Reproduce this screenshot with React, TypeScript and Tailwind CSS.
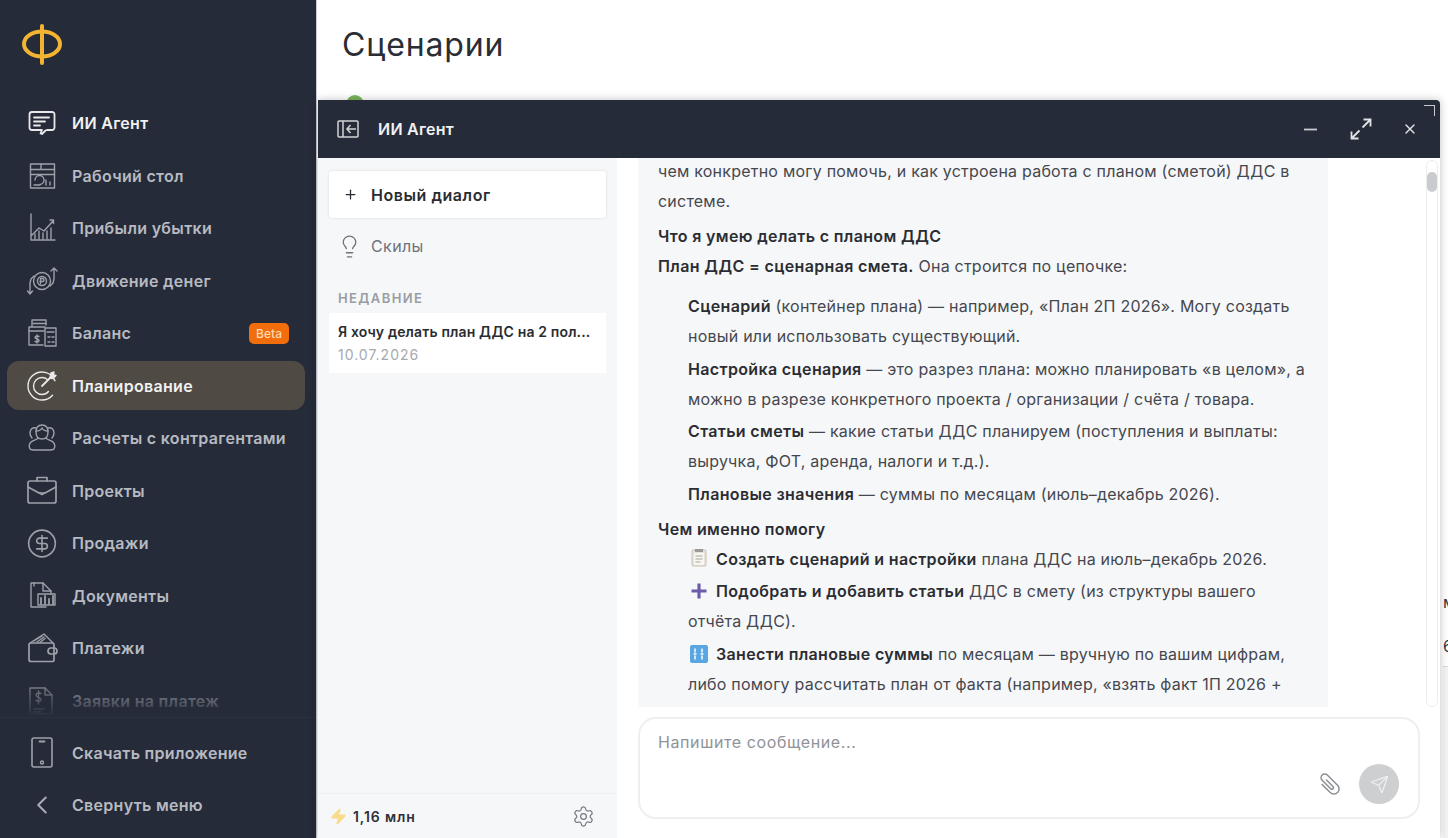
import React from "react";
import { Lightbulb, Settings, Send, ChevronLeft, CircleDollarSign, X, Plus, Zap } from "lucide-react";

const S = ({ children, size = 32 }: { children: React.ReactNode; size?: number }) => (
  <svg width={size} height={size} viewBox="0 0 32 32" fill="none" stroke="currentColor" strokeWidth="1.4" strokeLinecap="round" strokeLinejoin="round" className="shrink-0">
    {children}
  </svg>
);

const icons: Record<string, React.ReactNode> = {
  agent: (
    <S>
      <path d="M6 5h20a2.500 2.500 0 0 1 2.500 2.500v13a2.500 2.500 0 0 1-2.500 2.500h-5l-1.500.5-3.500 3.500-1.500-.5 1.500-3.500H6a2.500 2.500 0 0 1-2.500-2.500v-13A2.500 2.500 0 0 1 6 5z" strokeWidth="1.800" />
      <path d="M8 10.500h15M8 14.500h11M8 18.500h6" strokeWidth="1.800" />
    </S>
  ),
  desk: (
    <S>
      <rect x="4.500" y="4" width="24" height="24" />
      <path d="M4.500 9.500h24M4.500 14.500h24M15 4v5.500" />
      <path d="M9 20a4.500 4.500 0 1 1 5 4.500M8 25h6M20 20v5M24 22v3" />
    </S>
  ),
  profit: (
    <S>
      <path d="M5 2v26h24M5 24l8-8 5 3 9-10M24 8h3.500v3.500" />
      <path d="M9 27v-5M13 27v-8M17 27v-6M21 27v-8M25 27v-11" />
    </S>
  ),
  money: (
    <S>
      <circle cx="16" cy="16" r="8.500" />
      <circle cx="16" cy="16" r="4.500" />
      <path d="M14.500 18.500v-5h2a1.500 1.500 0 0 1 0 3h-2.500" />
      <path d="M28 14V3.500M25 6l3-3 3 3M4 18v10.500M1.500 26l2.500 3 2.500-3M8 11 5 14l-1 4M24 21l3-3 1-4" />
    </S>
  ),
  balance: (
    <S>
      <path d="M6 10V3h14v5M3 28V10h16M3 28h14" />
      <path d="M7 6.500h13M3 14h15" />
      <rect x="19" y="11" width="11" height="18" />
      <path d="M21 15h7M22 20h2M26 20h2M22 25h2M26 25h2" />
      <path d="M11 18v8M13 19.500c-2-1-4-.5-4 1 0 2 4 1 4 3s-2 1.500-4 1" />
    </S>
  ),
  plan: (
    <S>
      <circle cx="16" cy="16" r="14" strokeDasharray="72 16" strokeDashoffset="-10" />
      <circle cx="16" cy="16" r="8.500" strokeDasharray="40 14" strokeDashoffset="-6" />
      <path d="M16 16 26 6" strokeWidth="1.800" />
      <path d="m25 3 3-1-.5 3 2.500.5-3 3-3-.5z" fill="currentColor" />
    </S>
  ),
  people: (
    <S>
      <path d="M16 3c-4 0-6 3-6 7s2 7 6 7 6-3 6-7-2-7-6-7z" />
      <path d="M10 9c3 0 5-1 6-3 1 2 3 3 6 3" />
      <path d="M12 16c-1 2-5 2-7 4-2 2-2 5-1 7 1 1 4 1 6 1h12c3 0 5 0 6-1 1-2 1-5-1-7-2-2-6-2-7-4" />
      <path d="M10 6C7 5 4 7 4 11c0 2 1 4 2 5M22 6c3-1 6 1 6 5 0 2-1 4-2 5" />
    </S>
  ),
  projects: (
    <S>
      <rect x="2" y="6" width="28" height="22" rx="2" strokeWidth="1.700" />
      <path d="M11 6V2.500h10V6" strokeWidth="1.700" />
      <path d="M2 12 13 18h6l11-6" strokeWidth="1.700" />
      <path d="M13.500 18l2.500 1.500 2.500-1.500" strokeWidth="1.700" />
    </S>
  ),
  docs: (
    <S>
      <path d="M5 3h12l8 8v3M5 3v24h15" />
      <path d="M8 3v3M17 3v8h8" />
      <rect x="12" y="14" width="17" height="11" />
      <path d="M15 24v-6M19 24v-8M23 24v-5M27 24v-8" strokeWidth="1.800" />
    </S>
  ),
  wallet: (
    <S>
      <path d="M3 13a2 2 0 0 1 2-2h21a2 2 0 0 1 2 2v15a1.500 1.500 0 0 1-1.500 1.500H5a2 2 0 0 1-2-2z" strokeWidth="1.700" />
      <rect x="22" y="16" width="9" height="6" rx="3" strokeWidth="1.700" />
      <path d="M4 11 18 2l9 9M8 9l8-5M11 10l7-5M14 10.500l5-4" />
    </S>
  ),
  request: (
    <S>
      <path d="M4 3h15l7 7v19H4z" />
      <path d="M19 3v7h7M8 24h10M8 27h7" />
      <path d="M15 8.500c-2-1-5-.5-5 1.500 0 3 5 2 5 4.500s-3 2-5 1M12.500 6v13" />
    </S>
  ),
  phone: (
    <S>
      <rect x="6" y="1" width="20" height="29" rx="2" strokeWidth="1.600" />
      <path d="M13.500 4.500h5" strokeWidth="1.800" />
      <circle cx="16" cy="25.500" r="1.500" />
    </S>
  ),
};

const nav = [
  { key: "agent", label: "ИИ Агент", white: true },
  { key: "desk", label: "Рабочий стол" },
  { key: "profit", label: "Прибыли убытки" },
  { key: "money", label: "Движение денег" },
  { key: "balance", label: "Баланс", beta: true },
  { key: "plan", label: "Планирование", active: true },
  { key: "people", label: "Расчеты с контрагентами" },
  { key: "projects", label: "Проекты" },
  { key: "dollar", label: "Продажи" },
  { key: "docs", label: "Документы" },
  { key: "wallet", label: "Платежи" },
  { key: "request", label: "Заявки на платеж" },
];

type Item = { key: string; label: string; white?: boolean; active?: boolean; beta?: boolean };

function NavRow({ item }: { item: Item }) {
  const bright = item.white || item.active;
  return (
    <div
      className={`mr-[11px] ml-[7px] flex h-[49px] shrink-0 items-center rounded-[12px] pr-[16px] pl-[19px] ${
        item.active ? "bg-[#4f4a43]" : ""
      } ${bright ? "text-[#f1f1f2]" : "text-[#b7bac1]"}`}
    >
      <span className={`flex w-[32px] justify-center ${bright ? "text-[#e9e9ea]" : "text-[#9da1a9]"}`}>
        {item.key === "dollar" ? <CircleDollarSign size={33} strokeWidth={1.2} /> : icons[item.key]}
      </span>
      <span className="ml-[14px] text-[16px] font-semibold tracking-[0.3px]">{item.label}</span>
      {item.beta && (
        <span className="ml-auto rounded-[5px] bg-[#f26d0c] px-[7px] py-[3px] text-[12px] leading-[15px] font-medium text-[#ffd9b5]">
          Beta
        </span>
      )}
    </div>
  );
}

const B = ({ children }: { children: React.ReactNode }) => <b className="font-semibold tracking-[0.35px] text-[#2b2d33]">{children}</b>;

function Para({ children, mt = 0, indent = false }: { children: React.ReactNode; mt?: number; indent?: boolean }) {
  return (
    <p className={indent ? "pl-[30px]" : ""} style={{ marginTop: mt }}>
      {children}
    </p>
  );
}

function Clipboard() {
  return (
    <svg width="16" height="18" viewBox="0 0 16 18" className="mr-[9px] ml-[3px] inline-block align-[-2px]">
      <rect x="1" y="1" width="14" height="16" rx="1" fill="#e8e4dc" stroke="#c9c3b6" />
      <rect x="3" y="4" width="10" height="12" fill="#f7f6f2" />
      <rect x="4" y="0" width="8" height="3" fill="#9b9a98" />
      <path d="M4.500 7h7M4.500 10h7M4.500 13h5" stroke="#a5a5a5" strokeWidth="1" />
    </svg>
  );
}
function PurplePlus() {
  return (
    <svg width="18" height="18" viewBox="0 0 18 18" className="mr-[8px] ml-[2px] inline-block align-[-3px]">
      <path d="M9 1.500v15M1.500 9h15" stroke="#6c5cab" strokeWidth="3.200" />
    </svg>
  );
}
function Numbers() {
  return (
    <svg width="18" height="18" viewBox="0 0 18 18" className="mr-[8px] ml-[2px] inline-block align-[-3px]">
      <rect width="18" height="18" rx="2" fill="#5aa6e2" />
      <path d="M5 3.500v4M5 10.500v4M12 3.500v4M12 10.500v4M3.500 9h3M10.500 9h3" stroke="#fff" strokeWidth="1.500" />
    </svg>
  );
}

export default function App() {
  return (
    <div className="relative flex h-[838px] w-[1448px] overflow-hidden bg-white font-['Inter',sans-serif]">
      <aside className="flex h-full w-[317px] shrink-0 flex-col border-r border-[#c8cbd0] bg-[#252b39]">
        <div className="h-[98.500px] shrink-0 pt-[24px] pl-[21px]">
          <svg width="42" height="42" viewBox="0 0 42 42" fill="none" stroke="#f2b431" strokeWidth="4" role="img" aria-label="logo">
            <ellipse cx="21" cy="20" rx="18" ry="12.500" />
            <path d="M21 2v37" strokeLinecap="round" />
          </svg>
        </div>
        <div className="relative h-[618.500px] shrink-0 overflow-hidden">
          <div className="flex flex-col gap-[3.5px]">
            {nav.map((n) => (
              <NavRow key={n.key} item={n} />
            ))}
          </div>
          <div className="absolute right-0 bottom-0 left-0 h-[44px] bg-gradient-to-b from-[#252b3900] to-[#252b39]" />
        </div>
        <div className="flex flex-1 flex-col gap-[3.5px] border-t border-[#2c3241] pt-[10px]">
          <NavRow item={{ key: "phone", label: "Скачать приложение" }} />
          <div className="mr-[11px] ml-[7px] flex h-[49px] items-center pl-[19px] text-[#b7bac1]">
            <span className="flex w-[32px] justify-center text-[#a9adb5]">
              <ChevronLeft size={30} strokeWidth={1.6} />
            </span>
            <span className="ml-[14px] text-[16px] font-semibold tracking-[0.3px]">Свернуть меню</span>
          </div>
        </div>
      </aside>

      <main className="flex min-w-0 flex-1">
        <div className="min-w-0 flex-1 pt-[24px] pl-[25px]">
          <h1 className="text-[32px] leading-[42px] font-normal tracking-[0.85px] text-[#2a2d34]">Сценарии</h1>
          <div className="mt-[29px] ml-[4px] h-[18px] w-[18px] rounded-full bg-[#7cb55b]" />
        </div>
        <div className="flex w-[8px] shrink-0 flex-col overflow-hidden bg-white pt-[592px] pl-[3px] text-[16px] leading-[20px] text-[#33363c]">
          <span>м</span>
          <span className="mt-[24px]">6</span>
          <div className="mt-[10px] h-[1px] w-full shrink-0 bg-[#dcdde0]" />
          <div className="w-full flex-1 bg-[#f4f4f5]" />
        </div>
      </main>

      {/* AI agent window */}
      <section className="absolute top-[100px] left-[318px] flex h-[738px] w-[1122px] flex-col bg-white shadow-[0_0_8px_rgba(0,0,0,0.25)]">
        <header className="relative flex h-[58px] shrink-0 items-center rounded-tr-[4px] bg-[#252b39] pr-[22px] pl-[19px] text-[#f1f1f2]">
          <svg width="22" height="18" viewBox="0 0 22 18" fill="none" stroke="#d2d3d6" strokeWidth="1.500">
            <rect x="1" y="1" width="20" height="16" rx="1" />
            <path d="M6 1v16M19 9h-9M13.500 5 10 9l3.500 4" />
          </svg>
          <span className="ml-[19px] text-[16px] font-semibold tracking-[0.25px]">ИИ Агент</span>
          <div className="ml-auto flex items-center gap-[30px] text-[#e2e3e5]">
            <svg width="13" height="13" viewBox="0 0 13 13" stroke="#c9cbcf" strokeWidth="1.800" className="mr-[3px]"><path d="M0 6.500h13" /></svg>
            <svg width="22" height="22" viewBox="0 0 22 22" fill="none" stroke="currentColor" strokeWidth="1.800">
              <path d="M13.500 1.500H20.500V8.500M20.500 1.500 12.500 9.500M8.500 20.500H1.500V13.500M1.500 20.500 9.500 12.500" />
            </svg>
            <X size={16} strokeWidth={2} />
          </div>
          <span className="absolute top-[5px] right-[5px] h-[11px] w-[11px] border-t-[1.500px] border-r-[1.500px] border-[#c9cbcf]" />
        </header>

        <div className="flex min-h-0 flex-1">
          <div className="flex w-[299px] shrink-0 flex-col bg-[#f6f7f9]">
            <div className="flex-1 px-[11px] pt-[13px]">
              <div className="flex h-[47px] items-center rounded-[3px] bg-white pl-[14px] text-[#2a2c31] shadow-[0_0_3px_rgba(0,0,0,0.12)]">
                <Plus size={15} strokeWidth={2} />
                <span className="ml-[13px] text-[16px] font-semibold tracking-[0.55px]">Новый диалог</span>
              </div>
              <div className="mt-[17px] flex h-[22px] items-center pl-[1px] text-[#6f7279]">
                <Lightbulb size={25} strokeWidth={1.25} className="ml-[7px]" />
                <span className="ml-[9px] text-[16px] tracking-[0.4px]">Скилы</span>
              </div>
              <div className="mt-[32px] pl-[9px] text-[13px] leading-[18px] font-semibold tracking-[1.4px] text-[#9a9da4]">НЕДАВНИЕ</div>
              <div className="mt-[6px] h-[60px] bg-white pt-[10px] pr-[5px] pl-[9px]">
                <div className="truncate text-[14px] leading-[18px] font-semibold tracking-[0.15px] text-[#2a2c31]">Я хочу делать план ДДС на 2 пол...</div>
                <div className="mt-[5px] text-[14px] leading-[18px] tracking-[1px] text-[#a6a9af]">10.07.2026</div>
              </div>
            </div>
            <div className="flex h-[45px] shrink-0 items-center border-t border-[#eceef1] pr-[22px] pl-[12px]">
              <Zap size={17} fill="#f8dc8e" stroke="#f8dc8e" />
              <span className="ml-[6px] text-[14px] font-semibold tracking-[0.9px] text-[#2e3036]">1,16 млн</span>
              <Settings size={23} strokeWidth={1.25} className="ml-auto text-[#75787f]" />
            </div>
          </div>

          <div className="relative flex min-w-0 flex-1 flex-col">
            <div className="relative h-[549px] shrink-0 overflow-hidden pl-[21px]">
              <div className="h-full w-[690px] overflow-hidden bg-[#f6f7f9] px-[20px] text-[16px] leading-[30px] tracking-[0.22px] text-[#45474e]">
                <div className="-mt-[2px]">
                  <Para>чем конкретно могу помочь, и как устроена работа с планом (сметой) ДДС в системе.</Para>
                  <Para mt={5}><B>Что я умею делать с планом ДДС</B></Para>
                  <Para><B>План ДДС = сценарная смета.</B> Она строится по цепочке:</Para>
                  <Para mt={10} indent><B>Сценарий</B> (контейнер плана) — например, «План 2П 2026». Могу создать новый или использовать существующий.</Para>
                  <Para mt={3} indent><B>Настройка сценария</B> — это разрез плана: можно планировать «в целом», а можно в разрезе конкретного проекта / организации / счёта / товара.</Para>
                  <Para mt={2} indent><B>Статьи сметы</B> — какие статьи ДДС планируем (поступления и выплаты: выручка, ФОТ, аренда, налоги и т.д.).</Para>
                  <Para mt={3} indent><B>Плановые значения</B> — суммы по месяцам (июль–декабрь 2026).</Para>
                  <Para mt={5}><B>Чем именно помогу</B></Para>
                  <Para indent><Clipboard /><B>Создать сценарий и настройки</B> плана ДДС на июль–декабрь 2026.</Para>
                  <Para mt={2} indent><PurplePlus /><B>Подобрать и добавить статьи</B> ДДС в смету (из структуры вашего отчёта ДДС).</Para>
                  <Para mt={3} indent><Numbers /><B>Занести плановые суммы</B> по месяцам — вручную по вашим цифрам, либо помогу рассчитать план от факта (например, «взять факт 1П 2026 + 10%»).</Para>
                </div>
              </div>
              <div className="absolute top-[2px] right-[2px] h-[547px] w-[12px] rounded-full border border-[#eceded] bg-white">
                <div className="mx-auto mt-[11px] h-[20px] w-[10px] rounded-full bg-[#c9cbce]" />
              </div>
            </div>
            <div className="mt-[10px] ml-[21px] flex h-[102px] w-[782px] flex-col rounded-[18px] border-2 border-[#eeeff1] bg-white pt-[12px] pr-[19px] pl-[18px]">
              <div className="text-[16px] leading-[22px] tracking-[0.6px] text-[#8f9299]">Напишите сообщение...</div>
              <div className="mt-[11px] flex items-center justify-end text-[#8b8e94]">
                <svg width="30" height="30" viewBox="0 0 26 26" fill="none" stroke="currentColor" strokeWidth="1.300" strokeLinecap="round" className="mr-[15px]">
                  <g transform="rotate(-45 13 13)">
                    <path d="M8.500 9V19a4.500 4.500 0 0 0 9 0V6.500a3.200 3.200 0 0 0-6.400 0V17a1.400 1.400 0 0 0 2.800 0V9" />
                  </g>
                </svg>
                <div className="flex h-[40px] w-[40px] items-center justify-center rounded-full bg-[#cdcfd1]">
                  <Send size={19} strokeWidth={1.5} className="text-[#f1f1f2]" />
                </div>
              </div>
            </div>
          </div>
        </div>
      </section>
    </div>
  );
}
